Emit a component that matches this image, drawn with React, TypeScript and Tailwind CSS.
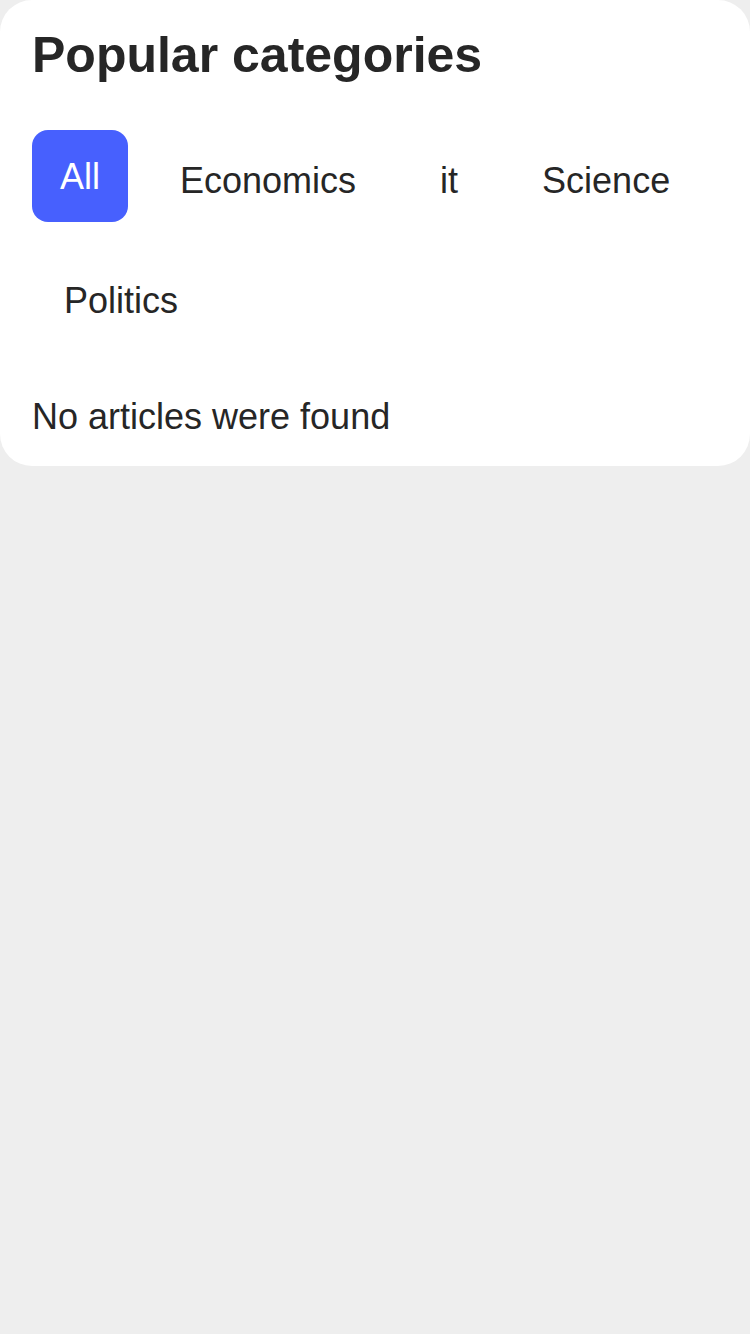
export default function App() {
  const cats = ["Economics", "it", "Science", "Politics"];
  return (
    <div
      className="min-h-[1334px] w-[750px] bg-[#eeeeee]"
      style={{ fontFamily: '"Liberation Sans", Arial, sans-serif' }}
    >
      <div className="rounded-[32px] bg-white px-8 pt-[30px] pb-[31px] text-[#262626]">
        <h1 className="text-[50px] font-bold leading-none">Popular categories</h1>
        <div className="mt-[50px] flex flex-wrap items-start gap-5">
          <button className="flex h-[92px] items-center rounded-2xl bg-[#4760fe] px-[28px] pt-[1px] text-[36px] leading-none text-white">
            All
          </button>
          {cats.map((c) => (
            <button
              key={c}
              className="flex h-[100px] items-center px-8 pt-[2px] text-[36px] leading-none text-[#262626]"
            >
              {c}
            </button>
          ))}
        </div>
        <p className="mt-[49px] text-[36px] leading-none">No articles were found</p>
      </div>
    </div>
  );
}
